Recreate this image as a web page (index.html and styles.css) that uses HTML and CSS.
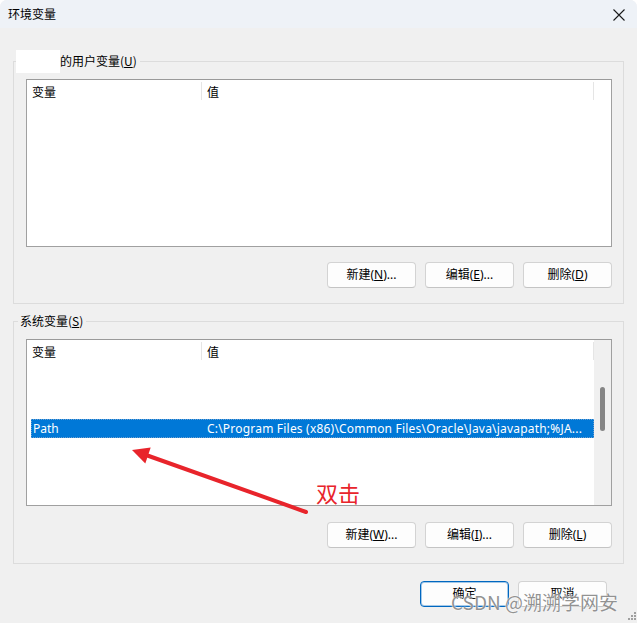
FILE: index.html
```html
<!DOCTYPE html>
<html lang="zh-CN">
<head>
<meta charset="utf-8">
<title>环境变量</title>
<link rel="stylesheet" href="styles.css">
</head>
<body>
<div class="window">
  <div class="titlebar">
    <span class="title">环境变量</span>
    <svg class="close" width="12" height="12" viewBox="0 0 12 12"><path d="M0.5 0.5 L11.5 11.5 M11.5 0.5 L0.5 11.5" stroke="#1a1a1a" stroke-width="1.1" fill="none"/></svg>
  </div>
  <div class="main">
    <div class="group group-user">
      <div class="group-label"><span class="redact"></span><span class="label-text">的用户变量(<u>U</u>)</span></div>
      <div class="listbox list-user">
        <div class="lv-body">
          <div class="lv-header">
            <div class="hcol hc1">变量</div><div class="sep"></div>
            <div class="hcol hc2">值</div><div class="sep"></div>
          </div>
        </div>
      </div>
      <div class="btn-row btn-row-user">
        <button class="btn">新建(<u>N</u>)...</button>
        <button class="btn">编辑(<u>E</u>)...</button>
        <button class="btn">删除(<u>D</u>)</button>
      </div>
    </div>
    <div class="group group-sys">
      <div class="group-label sys-label"><span class="label-text">系统变量(<u>S</u>)</span></div>
      <div class="listbox list-sys">
        <div class="lv-body">
          <div class="lv-header">
            <div class="hcol hc1">变量</div><div class="sep"></div>
            <div class="hcol hc2">值</div><div class="sep"></div>
          </div>
          <div class="spacer"></div>
          <div class="row selected">
            <div class="cell cell1">Path</div>
            <div class="cell cell2">C:\Program Files (x86)\Common Files\Oracle\Java\javapath;%JA...</div>
          </div>
        </div>
        <div class="scrollbar"><div class="thumb"></div></div>
      </div>
      <div class="btn-row btn-row-sys">
        <button class="btn">新建(<u>W</u>)...</button>
        <button class="btn">编辑(<u>I</u>)...</button>
        <button class="btn">删除(<u>L</u>)</button>
      </div>
    </div>
    <div class="dlg-row">
      <button class="btn btn-primary">确定</button>
      <button class="btn">取消</button>
    </div>
  </div>

  <svg class="arrow" width="637" height="623" viewBox="0 0 637 623">
    <line x1="306" y1="512" x2="146" y2="455" stroke="#e8242b" stroke-width="4" stroke-linecap="round"/>
    <polygon points="132,450 150.7,447.6 145.3,463.4" fill="#e8242b"/>
  </svg>
  <div class="annot">双击</div>
  <div class="watermark">CSDN @溯溯学网安</div>
  <svg class="grip" width="10" height="10" viewBox="0 0 10 10">
    <g fill="#a0a0a0">
      <rect x="7" y="1" width="2" height="2"/>
      <rect x="4" y="4" width="2" height="2"/>
      <rect x="7" y="4" width="2" height="2"/>
      <rect x="1" y="7" width="2" height="2"/>
      <rect x="4" y="7" width="2" height="2"/>
      <rect x="7" y="7" width="2" height="2"/>
    </g>
  </svg>
</div>
</body>
</html>
```
FILE: styles.css
```css
* { box-sizing: border-box; }

html, body { margin: 0; padding: 0; background: #ffffff; }

body {
  font-family: "Noto Sans", "Noto Sans CJK SC", sans-serif;
  font-size: 12px;
  color: #000;
}

.window {
  width: 637px;
  height: 623px;
  background: #f0f0f0;
  position: relative;
  overflow: hidden;
  border-radius: 7px 7px 0 0;
}

.titlebar {
  height: 28px;
  background: #eef2f7;
  display: flex;
  align-items: center;
  justify-content: space-between;
  padding: 0 12px 0 8px;
}

.title {
  font-family: "Noto Sans CJK SC", sans-serif;
  font-size: 12px;
  line-height: 16px;
}

.close { display: block; margin-top: 1px; }

.main { padding: 33px 13px 0 13px; }

.group {
  border: 1px solid #dcdcdc;
  padding: 0 11px 15px 12px;
}

.group-sys { margin-top: 17px; }

.group-label {
  display: flex;
  align-items: center;
  height: 16px;
  margin-top: -9px;
  margin-left: -10px;
  font-family: "Noto Sans CJK SC", sans-serif;
}

.sys-label { margin-left: -8px; }

.redact {
  width: 44px;
  height: 23px;
  background: #ffffff;
  flex: none;
}

.label-text {
  background: #f0f0f0;
  padding: 0 3px 0 0;
  line-height: 16px;
  font-family: "Noto Sans CJK SC", sans-serif;
}

.sys-label .label-text { padding: 0 3px 0 2px; }

.listbox {
  margin-top: 10px;
  background: #fff;
  border: 1px solid #a0a0a0;
  border-top-color: #9a9a9a;
  display: flex;
}

.list-user { height: 168px; }
.list-sys { height: 167px; }

.lv-body {
  flex: 1;
  display: flex;
  flex-direction: column;
}

.lv-header {
  height: 22px;
  display: flex;
  align-items: center;
  font-family: "Noto Sans CJK SC", sans-serif;
}

.hcol {
  height: 100%;
  display: flex;
  align-items: center;
  padding-left: 5px;
}

.hc1 { width: 174px; }
.hc2 { width: 391px; }

.sep {
  width: 1px;
  height: 18px;
  background: #e5e5e5;
  flex: none;
}

.spacer { height: 57px; }

.row {
  height: 19px;
  display: flex;
  align-items: center;
  margin-left: 4px;
  margin-right: 0;
}

.selected {
  background: #0078d7;
  color: #fff;
  border: 1px dotted #6c9fd0;
}

.cell { white-space: nowrap; line-height: 17px; }

.cell1 { width: 175px; padding-left: 1px; }

.cell2 { overflow: hidden; letter-spacing: 0.2px; }

.scrollbar {
  width: 17px;
  flex: none;
  background: #f0f0f0;
  padding: 47px 0 0 6px;
}

.thumb {
  width: 5px;
  height: 44px;
  background: #858585;
  border-radius: 3px;
}

.btn-row {
  display: flex;
  justify-content: flex-end;
  gap: 9px;
}

.btn-row-user { margin-top: 15px; }
.btn-row-sys { margin-top: 16px; }

.btn {
  width: 89px;
  height: 26px;
  padding: 0;
  margin: 0;
  border: 1px solid #d3d3d3;
  border-bottom-color: #c4c4c4;
  border-radius: 4px;
  background: #fdfdfd;
  color: #000;
  font-family: "Noto Sans", "Noto Sans CJK SC", sans-serif;
  font-size: 12px;
  line-height: 16px;
}

.btn-primary {
  border: 1px solid #0067c0;
  box-shadow: inset 0 0 0 1px rgba(0, 103, 192, 0.35);
}

.dlg-row {
  display: flex;
  justify-content: flex-end;
  gap: 9px;
  margin-top: 17px;
  margin-right: 17px;
}

.arrow {
  position: absolute;
  left: 0;
  top: 0;
  pointer-events: none;
}

.annot {
  position: absolute;
  left: 316px;
  top: 478px;
  font-family: "Noto Sans CJK SC", sans-serif;
  font-size: 22px;
  line-height: 28px;
  color: #e8242b;
}

.watermark {
  position: absolute;
  left: 451px;
  top: 590px;
  font-family: "Noto Sans CJK SC", sans-serif;
  font-size: 19px;
  line-height: 24px;
  color: rgba(110, 110, 110, 0.75);
  text-shadow: 0 0 2px #fff, 0 0 1px #fff;
  white-space: nowrap;
}

.grip {
  position: absolute;
  left: 627px;
  top: 611px;
}
```
